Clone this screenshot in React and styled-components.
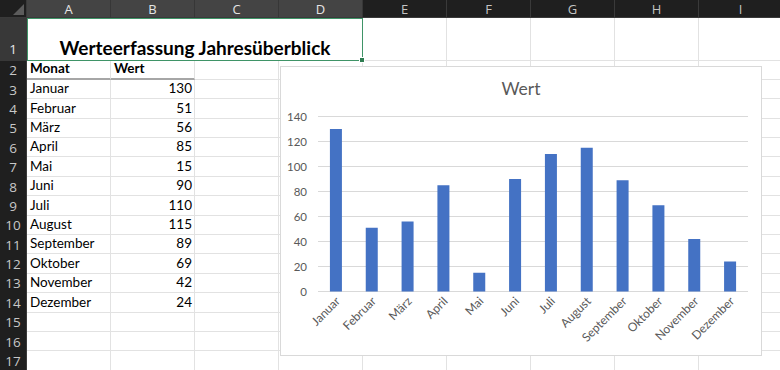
import React from 'react';
import styled, { createGlobalStyle } from 'styled-components';

const GlobalStyle = createGlobalStyle`
  html, body {
    margin: 0;
    padding: 0;
    background: #ffffff;
    overflow: hidden;
  }
  body {
    font-family: 'Lato', 'Liberation Sans', sans-serif;
  }
`;

const COLS = ['A', 'B', 'C', 'D', 'E', 'F', 'G', 'H', 'I'];

const DATA = [
  ['Januar', 130],
  ['Februar', 51],
  ['März', 56],
  ['April', 85],
  ['Mai', 15],
  ['Juni', 90],
  ['Juli', 110],
  ['August', 115],
  ['September', 89],
  ['Oktober', 69],
  ['November', 42],
  ['Dezember', 24],
];

const Sheet = styled.div`
  position: relative;
  display: grid;
  grid-template-columns: 27px repeat(9, 84px);
  grid-template-rows: 18px 42.5px repeat(16, 19.4px);
  width: 783px;
  height: 370px;
  overflow: hidden;
  background: #ffffff;
`;

const Corner = styled.div`
  position: relative;
  background: #1f1f1f;
  border-right: 1px solid #3a3a3a;
  border-bottom: 1px solid #3a3a3a;
  box-sizing: border-box;
  &::after {
    content: '';
    position: absolute;
    right: 2px;
    bottom: 2px;
    width: 0;
    height: 0;
    border-left: 11px solid transparent;
    border-bottom: 11px solid #5c5c5c;
  }
`;

const ColHeader = styled.div`
  display: flex;
  align-items: center;
  justify-content: center;
  box-sizing: border-box;
  background: ${(p) => (p.$selected ? '#444444' : '#1f1f1f')};
  color: ${(p) => (p.$selected ? '#e6e6e6' : '#c4c4c4')};
  border-right: 1px solid ${(p) => (p.$selected ? '#373737' : '#3a3a3a')};
  border-bottom: 1px solid #3a3a3a;
  font-family: 'Open Sans', 'Liberation Sans', sans-serif;
  font-size: 13px;
`;

const RowHeader = styled.div`
  display: flex;
  align-items: ${(p) => (p.$tall ? 'flex-end' : 'center')};
  justify-content: center;
  box-sizing: border-box;
  padding-bottom: ${(p) => (p.$tall ? '3px' : '0')};
  background: ${(p) => (p.$selected ? '#383838' : '#1f1f1f')};
  color: ${(p) => (p.$selected ? '#e6e6e6' : '#c8c8c8')};
  border-right: 1px solid #3a3a3a;
  font-family: 'Open Sans', 'Liberation Sans', sans-serif;
  font-size: 13.5px;
`;

const Cell = styled.div`
  display: flex;
  align-items: flex-end;
  justify-content: ${(p) => (p.$right ? 'flex-end' : 'flex-start')};
  box-sizing: border-box;
  padding: 0 2px 1px 3px;
  border-right: 1px solid #e2e2e2;
  border-bottom: ${(p) => (p.$underline ? '2px solid #a6a6a6' : '1px solid #e2e2e2')};
  font-size: 13.5px;
  line-height: 17px;
  font-weight: ${(p) => (p.$bold ? 700 : 400)};
  color: #000000;
  white-space: nowrap;
`;

const TitleCell = styled.div`
  position: relative;
  grid-column: span 4;
  display: flex;
  align-items: flex-end;
  justify-content: center;
  box-sizing: border-box;
  padding-bottom: 1px;
  border: 1px solid #3f9467;
  font-size: 19px;
  font-weight: 700;
  line-height: 22px;
  color: #000000;
  &::after {
    content: '';
    position: absolute;
    right: -3px;
    bottom: -3px;
    width: 4px;
    height: 4px;
    background: #2f7d52;
    border: 1px solid #ffffff;
  }
`;

const ChartBox = styled.div`
  position: absolute;
  left: 280px;
  top: 66px;
  width: 482px;
  height: 290px;
  box-sizing: border-box;
  background: #ffffff;
  border: 1px solid #d9d9d9;
`;

function Chart() {
  const left = 37;
  const right = 467;
  const zero = 224;
  const scale = 1.25;
  const step = (right - left) / DATA.length;
  const ticks = [0, 20, 40, 60, 80, 100, 120, 140];
  return (
    <ChartBox>
      <svg width="480" height="288" style={{ display: 'block' }}>
        <text
          x="240"
          y="27.5"
          textAnchor="middle"
          fontFamily="Lato, sans-serif"
          fontSize="17.5"
          fill="#595959"
        >
          Wert
        </text>
        {ticks.map((t) => (
          <g key={t}>
            <line
              x1={left}
              x2={right}
              y1={zero - t * scale + 0.5}
              y2={zero - t * scale + 0.5}
              stroke="#d9d9d9"
              strokeWidth="1"
            />
            <text
              x="26"
              y={zero - t * scale + 4.5}
              textAnchor="end"
              fontFamily="Lato, sans-serif"
              fontSize="11.5"
              fill="#595959"
            >
              {t}
            </text>
          </g>
        ))}
        {DATA.map(([name, value], i) => {
          const cx = left + step * (i + 0.5);
          const h = value * scale;
          const ax = cx + 5;
          const ay = zero + 11;
          return (
            <g key={name}>
              <rect x={cx - 6} y={zero - h + 0.5} width="12" height={h} fill="#4472c4" />
              <text
                x={ax}
                y={ay}
                textAnchor="end"
                transform={`rotate(-45 ${ax} ${ay})`}
                fontFamily="Lato, sans-serif"
                fontSize="12"
                fill="#595959"
              >
                {name}
              </text>
            </g>
          );
        })}
      </svg>
    </ChartBox>
  );
}

export default function App() {
  const rows = [];
  for (let r = 2; r <= 17; r++) {
    const cells = [];
    if (r === 2) {
      cells.push(<Cell key="a" $bold $underline>Monat</Cell>);
      cells.push(<Cell key="b" $bold $underline>Wert</Cell>);
    } else if (r <= 14) {
      const [name, value] = DATA[r - 3];
      cells.push(<Cell key="a">{name}</Cell>);
      cells.push(<Cell key="b" $right>{value}</Cell>);
    } else {
      cells.push(<Cell key="a" />);
      cells.push(<Cell key="b" />);
    }
    for (let c = 2; c < COLS.length; c++) cells.push(<Cell key={COLS[c]} />);
    rows.push(
      <React.Fragment key={r}>
        <RowHeader>{r}</RowHeader>
        {cells}
      </React.Fragment>
    );
  }

  return (
    <>
      <GlobalStyle />
      <Sheet>
        <Corner />
        {COLS.map((c, i) => (
          <ColHeader key={c} $selected={i < 4}>
            {c}
          </ColHeader>
        ))}
        <RowHeader $tall $selected>
          1
        </RowHeader>
        <TitleCell>Werteerfassung Jahresüberblick</TitleCell>
        {COLS.slice(4).map((c) => (
          <Cell key={c} />
        ))}
        {rows}
        <Chart />
      </Sheet>
    </>
  );
}
